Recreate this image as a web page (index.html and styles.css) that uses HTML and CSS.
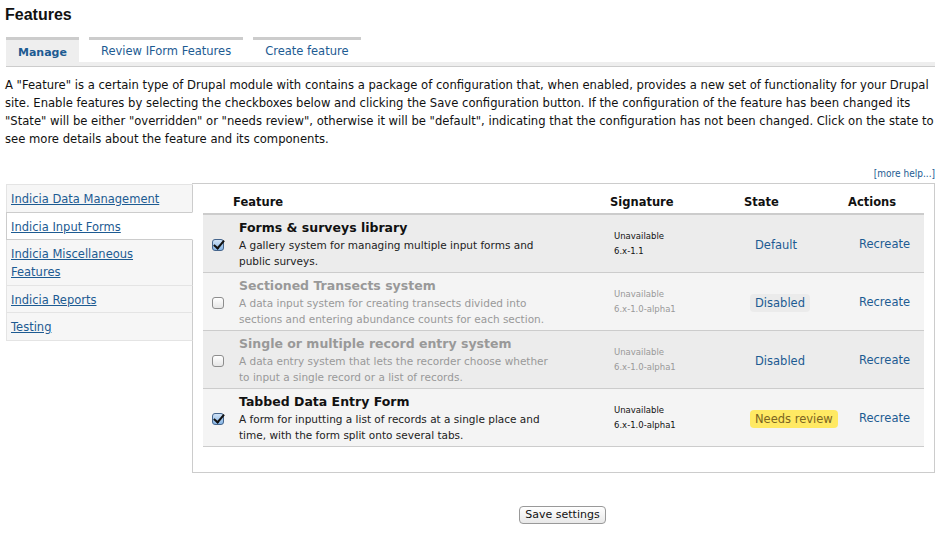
FILE: index.html
```html
<!DOCTYPE html>
<html>
<head>
<meta charset="utf-8">
<link rel="stylesheet" href="styles.css">
</head>
<body>
<h1 class="title">Features</h1>
<div class="tabs">
  <ul class="tab-list">
    <li class="tab active"><a href="#">Manage</a></li>
    <li class="tab"><a href="#">Review IForm Features</a></li>
    <li class="tab"><a href="#">Create feature</a></li>
  </ul>
  <div class="tab-strip"></div>
</div>
<p class="intro">A "Feature" is a certain type of Drupal module with contains a package of configuration that, when enabled, provides a new set of functionality for your Drupal site. Enable features by selecting the checkboxes below and clicking the Save configuration button. If the configuration of the feature has been changed its "State" will be either "overridden" or "needs review", otherwise it will be "default", indicating that the configuration has not been changed. Click on the state to see more details about the feature and its components.</p>
<div class="more-help"><a href="#">[more help...]</a></div>
<div class="vt-wrap">
  <ul class="vtabs">
    <li class="vtab"><a href="#">Indicia Data Management</a></li>
    <li class="vtab active"><a href="#">Indicia Input Forms</a></li>
    <li class="vtab"><a href="#">Indicia Miscellaneous Features</a></li>
    <li class="vtab"><a href="#">Indicia Reports</a></li>
    <li class="vtab"><a href="#">Testing</a></li>
  </ul>
  <div class="panel">
    <table class="features">
      <colgroup>
        <col class="c-check"><col class="c-feat"><col class="c-sig"><col class="c-state"><col class="c-act">
      </colgroup>
      <thead>
        <tr><th></th><th class="h-feat">Feature</th><th class="h-sig">Signature</th><th class="h-state">State</th><th class="h-act">Actions</th></tr>
      </thead>
      <tbody>
        <tr class="odd">
          <td class="cb"><span class="check checked"></span></td>
          <td class="feat"><div class="name">Forms &amp; surveys library</div><div class="desc">A gallery system for managing multiple input forms and public surveys.</div></td>
          <td class="sig">Unavailable<br>6.x-1.1</td>
          <td class="state"><a href="#" class="pill">Default</a></td>
          <td class="act"><a href="#">Recreate</a></td>
        </tr>
        <tr class="even disabled">
          <td class="cb"><span class="check"></span></td>
          <td class="feat"><div class="name">Sectioned Transects system</div><div class="desc">A data input system for creating transects divided into sections and entering abundance counts for each section.</div></td>
          <td class="sig">Unavailable<br>6.x-1.0-alpha1</td>
          <td class="state"><a href="#" class="pill grey">Disabled</a></td>
          <td class="act"><a href="#">Recreate</a></td>
        </tr>
        <tr class="odd disabled">
          <td class="cb"><span class="check"></span></td>
          <td class="feat"><div class="name">Single or multiple record entry system</div><div class="desc">A data entry system that lets the recorder choose whether to input a single record or a list of records.</div></td>
          <td class="sig">Unavailable<br>6.x-1.0-alpha1</td>
          <td class="state"><a href="#" class="pill">Disabled</a></td>
          <td class="act"><a href="#">Recreate</a></td>
        </tr>
        <tr class="even">
          <td class="cb"><span class="check checked"></span></td>
          <td class="feat"><div class="name">Tabbed Data Entry Form</div><div class="desc">A form for inputting a list of records at a single place and time, with the form split onto several tabs.</div></td>
          <td class="sig">Unavailable<br>6.x-1.0-alpha1</td>
          <td class="state"><a href="#" class="pill yellow">Needs review</a></td>
          <td class="act"><a href="#">Recreate</a></td>
        </tr>
      </tbody>
    </table>
  </div>
</div>
<div class="actions"><button class="save">Save settings</button></div>
</body>
</html>
```
FILE: styles.css
```css
html, body { margin: 0; padding: 0; background: #fff; }
body { font-family: "DejaVu Sans", "Liberation Sans", sans-serif; color: #222; width: 943px; height: 536px; overflow: hidden; }
a { color: #1d5b92; text-decoration: none; }

.title { font-family: "Liberation Sans", Arial, sans-serif; font-size: 16px; font-weight: bold; margin: 0; padding: 5px 0 0 5px; line-height: 20px; color: #111; }

.tabs { margin: 12px 8px 0 6px; }
.tab-list { list-style: none; margin: 0; padding: 0; display: flex; gap: 10px; }
.tab { border-top: 3px solid #ccc; height: 22px; padding: 0 12px; display: flex; align-items: center; font-size: 11.5px; }
.tab.active { background: #eee; font-weight: bold; font-size: 11px; padding: 2px 12px 0; height: 20px; }
.tab-strip { height: 4px; background: #eee; border-bottom: 1px solid #ccc; }

.intro { font-family: "DejaVu Sans Condensed", "DejaVu Sans", sans-serif; font-size: 12.9px; line-height: 18px; margin: 9px 5px 0 5px; color: #111; }
.more-help { text-align: right; font-size: 10px; margin: 20px 8px 0 0; line-height: 12px; font-family: "DejaVu Sans Condensed", sans-serif; }

.vt-wrap { display: flex; margin: 3px 8px 0 6px; align-items: flex-start; }
.vtabs { list-style: none; margin: 1px -1px 0 0; padding: 0; width: 187px; flex: none; position: relative; z-index: 1; border-top: 1px solid #e4e4e4; }
.vtab { background: #f6f6f6; border: 1px solid #e4e4e4; border-top: none; border-right: 1px solid #ccc; padding: 5px 8px 3.5px 4px; font-size: 11.5px; line-height: 18px; }
.vtab a { text-decoration: underline; }
.vtab.active { background: #fff; border-top: 1px solid #ccc; border-bottom: 1px solid #ccc; border-left-color: #ccc; border-right-color: #fff; margin-top: -1px; }

.panel { flex: 1; border: 1px solid #ccc; height: 279px; padding: 9px 10px 0 10px; }
.features { border-collapse: collapse; table-layout: fixed; width: 721px; }
.c-check { width: 30px; } .c-feat { width: 375px; } .c-sig { width: 134px; } .c-state { width: 104px; } .c-act { width: 78px; }
.features th { font-size: 11.5px; font-weight: bold; text-align: left; padding: 1px 0 3px; border-bottom: 2px solid #ccc; color: #111; height: 16px; }
.h-sig, .h-state, .h-act { padding-left: 2px !important; }
.features td { border-bottom: 1px solid #ccc; vertical-align: middle; }
.odd td { background: #ececec; }
.even td { background: #f4f4f4; }
.cb { padding-left: 9px; }
.feat { padding: 4px 6px 3px 6px; }
.name { font-weight: bold; font-size: 12.5px; line-height: 17px; color: #111; }
.desc { font-size: 10.5px; line-height: 16px; color: #222; margin-top: 1px; max-width: 318px; }
.sig { font-size: 8.5px; line-height: 15px; padding-left: 6px; color: #111; }
.state { padding-left: 8px; }
.act { padding-left: 13px; font-size: 11.5px; }
.pill { display: inline-block; font-size: 11.5px; padding: 1px 5px; border-radius: 4px; line-height: 16px; }
.pill.grey { background: #ebebeb; }
.pill.yellow { background: #ffe963; color: #7b6422; }
.disabled .name, .disabled .desc, .disabled .sig { color: #999; }

.check { display: inline-block; width: 12px; height: 12px; border: 1px solid #8d8d8d; border-radius: 3px; background: linear-gradient(#fff, #e6e6e6); box-sizing: border-box; vertical-align: middle; position: relative; }
.check.checked { border-color: #45658c; background: linear-gradient(#cfe2f6, #86b5e5); }
.check.checked::after { content: ""; position: absolute; left: 3px; top: -2px; width: 4px; height: 9px; border: solid #111; border-width: 0 2px 2px 0; transform: rotate(40deg); }

.actions { text-align: center; margin: 30px 10px 0 192px; }
.save { font-family: "DejaVu Sans", sans-serif; font-size: 11px; padding: 0 5px; height: 18px; border: 1px solid #999; border-radius: 4px; background: linear-gradient(#fff, #e8e8e8); color: #111; }
```
